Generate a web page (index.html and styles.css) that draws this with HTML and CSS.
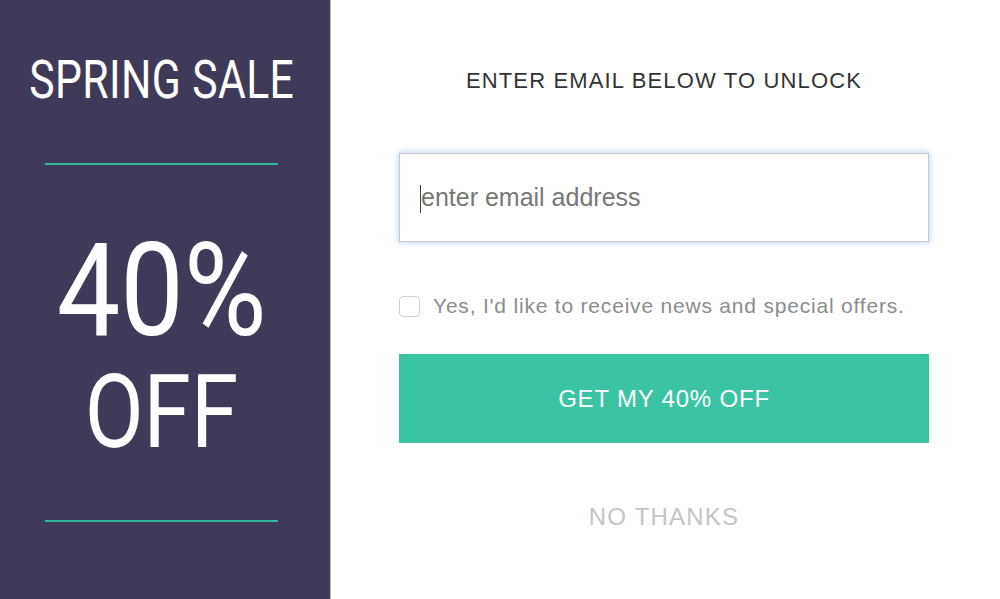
FILE: index.html
```html
<!DOCTYPE html>
<html lang="en">
<head>
<meta charset="utf-8">
<title>Spring Sale</title>
<link rel="stylesheet" href="styles.css">
</head>
<body>
<div class="popup">
  <aside class="promo">
    <h1 class="promo-title"><span class="narrow">SPRING SALE</span></h1>
    <div class="rule"></div>
    <div class="promo-big"><span class="narrow narrow-big">40%</span></div>
    <div class="promo-off"><span class="narrow narrow-off">OFF</span></div>
    <div class="rule rule-bottom"></div>
  </aside>
  <main class="form-side">
    <h2 class="unlock">ENTER EMAIL BELOW TO UNLOCK</h2>
    <div class="field">
      <input class="email" type="email" placeholder="enter email address">
      <span class="caret"></span>
    </div>
    <label class="consent">
      <span class="box"></span>
      <span class="consent-text">Yes, I'd like to receive news and special offers.</span>
    </label>
    <button class="cta" type="button">GET MY 40% OFF</button>
    <a class="decline" href="#">NO THANKS</a>
  </main>
</div>
</body>
</html>
```

FILE: styles.css
```css
* { box-sizing: border-box; }
html, body { margin: 0; padding: 0; background: #ffffff; }
body { width: 1000px; height: 599px; overflow: hidden; }

.popup {
  display: flex;
  width: 1000px;
  height: 599px;
}

.promo {
  width: 331px;
  flex: none;
  background: #3f3a58;
  border-right: 1px solid #b9b7c2;
  display: flex;
  flex-direction: column;
  align-items: center;
  padding-top: 53px;
  padding-right: 7px;
  color: #ffffff;
  font-family: Roboto, "Liberation Sans", sans-serif;
  font-weight: 400;
}

.narrow {
  display: inline-block;
  white-space: nowrap;
  transform: scaleX(0.79);
  transform-origin: center;
}
.narrow-big { transform: scaleX(0.87); }
.narrow-off { transform: scaleX(0.84); }

.promo-title {
  margin: 0;
  font-weight: 400;
  font-size: 54px;
  line-height: 54px;
  letter-spacing: 0.5px;
}

.rule {
  width: 233px;
  height: 2px;
  background: #35b59c;
  margin-top: 56px;
}

.promo-big {
  margin-top: 61px;
  font-size: 130px;
  line-height: 130px;
}

.promo-off {
  margin-top: 5px;
  font-size: 102px;
  line-height: 102px;
}

.rule-bottom { margin-top: 57px; }

.form-side {
  flex: 1;
  display: flex;
  flex-direction: column;
  align-items: center;
  padding-top: 70px;
  padding-right: 3px;
  font-family: "Liberation Sans", Arial, sans-serif;
}

.unlock {
  margin: 0;
  font-weight: normal;
  font-size: 22px;
  line-height: 22px;
  color: #333333;
  letter-spacing: 1.15px;
}

.field {
  position: relative;
  margin-top: 61px;
  width: 530px;
  height: 89px;
}

.email {
  width: 100%;
  height: 100%;
  border: 1px solid #c8c8c8;
  border-radius: 0;
  box-shadow: 0 0 6px 1px rgba(120, 170, 230, 0.45);
  padding: 0 0 0 21px;
  font-family: "Liberation Sans", Arial, sans-serif;
  font-size: 25px;
  color: #555;
  outline: none;
  background: #fff;
}
.email::placeholder { color: #777777; }

.caret {
  position: absolute;
  left: 21px;
  top: 32px;
  width: 1px;
  height: 28px;
  background: #444;
}

.consent {
  margin-top: 52px;
  width: 530px;
  display: flex;
  align-items: center;
  gap: 13px;
  height: 24px;
}

.box {
  width: 21px;
  height: 21px;
  border: 1px solid #cfcfcf;
  border-radius: 4px;
  flex: none;
}

.consent-text {
  font-size: 21px;
  line-height: 24px;
  color: #8c8c8c;
  white-space: nowrap;
  letter-spacing: 0.8px;
}

.cta {
  margin-top: 36px;
  width: 530px;
  height: 89px;
  border: none;
  background: #3bc4a3;
  color: #ffffff;
  font-family: "Liberation Sans", Arial, sans-serif;
  font-size: 24px;
  letter-spacing: 0.8px;
  padding: 0;
  cursor: pointer;
}

.decline {
  margin-top: 62px;
  font-size: 24px;
  line-height: 24px;
  color: #c5c5c5;
  letter-spacing: 1.2px;
  text-decoration: none;
}
```
